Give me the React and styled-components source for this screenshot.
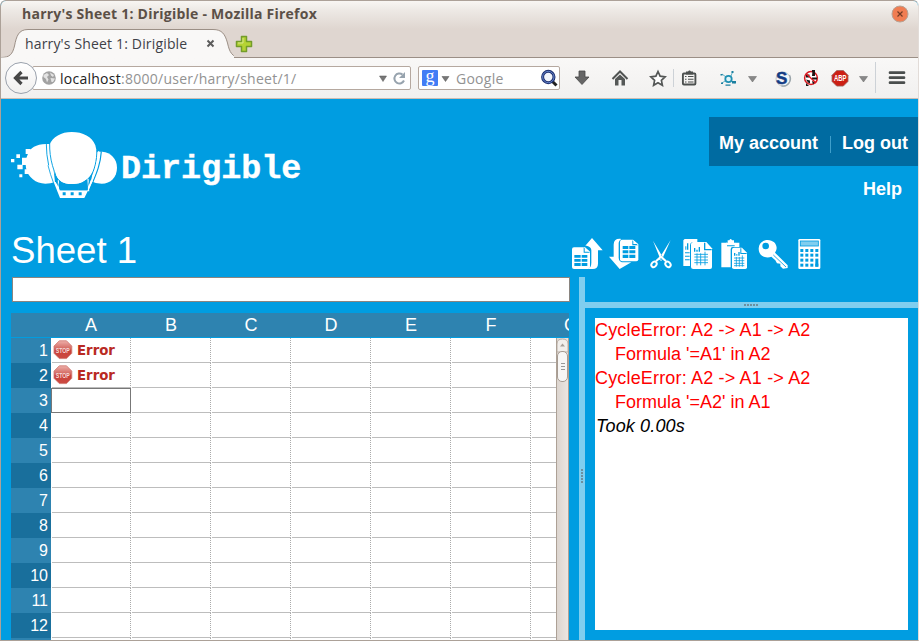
import React from "react";
import styled, { createGlobalStyle, css } from "styled-components";

const Global = createGlobalStyle`
  * { box-sizing: border-box; }
  html, body { margin: 0; padding: 0; overflow: hidden; background: #fff; }
  svg { display: block; flex: none; }
`;

const ui = css`
  font-family: "Open Sans", "Noto Sans", sans-serif;
`;

const Window = styled.div`
  width: 919px;
  height: 641px;
  display: flex;
  flex-direction: column;
  overflow: hidden;
  border: 1px solid #aca198;
  border-right-color: #e2dcd8;
  border-radius: 6px 6px 0 0;
  background: #009de1;
`;

const TitleBar = styled.div`
  height: 28px;
  flex: none;
  display: flex;
  align-items: center;
  justify-content: space-between;
  padding: 0 9px 3px 21px;
  background: linear-gradient(#f8f6f3, #eeeae6 30%, #dfd6d0);
`;

const WindowTitle = styled.span`
  ${ui}
  font-size: 14px;
  font-weight: 700;
  line-height: 20px;
  letter-spacing: 0.24px;
  color: #5b5047;
  white-space: nowrap;
`;

const TabStrip = styled.div`
  height: 29px;
  flex: none;
  display: flex;
  background: #dfd6d0;
  border-bottom: 1px solid #9b8f86;
`;

const Tab = styled.div`
  width: 233px;
  height: 29px;
  display: grid;
  flex: none;
  > * { grid-area: 1 / 1; }
`;

const TabContent = styled.div`
  display: flex;
  align-items: center;
  padding: 0 0 0 24px;
  z-index: 1;
`;

const TabLabel = styled.span`
  ${ui}
  width: 181px;
  font-size: 14px;
  line-height: 20px;
  letter-spacing: 0.16px;
  color: #3e4147;
  white-space: nowrap;
`;

const NewTab = styled.div`
  padding: 6px 0 0 1px;
`;

const NavBar = styled.div`
  height: 41px;
  flex: none;
  display: flex;
  align-items: flex-start;
  background: linear-gradient(#f9f8f7, #f1f0ef);
  border-bottom: 1px solid #cbbdb3;
`;

const BackButton = styled.div`
  width: 32px;
  height: 32px;
  margin: 4px 0 0 4px;
  flex: none;
  display: flex;
  align-items: center;
  justify-content: center;
  border: 1px solid #9aa1ac;
  border-radius: 50%;
  background: linear-gradient(#ffffff, #f0efee);
  z-index: 1;
`;

const Field = styled.div`
  height: 24px;
  width: ${(p) => p.$w}px;
  margin: 8px 0 0 ${(p) => p.$ml}px;
  padding: ${(p) => p.$pad};
  flex: none;
  display: flex;
  align-items: center;
  border: 1px solid #b5a89f;
  border-radius: 2px;
  background: #fff;
`;

const FieldText = styled.span`
  ${ui}
  flex: 1;
  font-size: 14px;
  line-height: 20px;
  letter-spacing: 0.26px;
  color: #929292;
  white-space: nowrap;
  margin-left: ${(p) => p.$ml}px;
  padding-top: 1px;
  b { font-weight: 400; color: #222; }
`;

const NavIcons = styled.div`
  height: 40px;
  width: 358px;
  flex: none;
`;

const Page = styled.main`
  flex: 1;
  min-height: 0;
  display: flex;
  flex-direction: column;
  font-family: "Liberation Sans", Arial, sans-serif;
  color: #fff;
`;

const SiteHeader = styled.header`
  height: 178px;
  flex: none;
  display: flex;
  justify-content: space-between;
`;

const Branding = styled.div`
  display: flex;
  flex-direction: column;
  padding: 32px 0 0 10px;
`;

const Logo = styled.div`
  display: flex;
  height: 68px;
`;

const LogoName = styled.span`
  font: 700 33.4px/40px "Liberation Mono", "Courier New", monospace;
  margin: 18px 0 0 2px;
  -webkit-text-stroke: 0.4px #fff;
`;

const SheetTitle = styled.h1`
  margin: 30px 0 0 0;
  font-size: 36.6px;
  font-weight: 400;
  line-height: 43px;
`;

const HeaderSide = styled.div`
  display: flex;
  flex-direction: column;
  align-items: flex-end;
  padding-top: 18px;
`;

const AccountLinks = styled.nav`
  width: 209px;
  height: 49px;
  display: flex;
  align-items: center;
  justify-content: space-between;
  padding: 2px 10px 0;
  background: #006ba1;
  font-size: 18px;
  font-weight: 700;
  line-height: 24px;
`;

const LinkDivider = styled.i`
  width: 1px;
  height: 17px;
  margin-top: 3px;
  background: #3f9fcb;
`;

const HelpLink = styled.a`
  margin: 11px 16px 0 0;
  font-size: 18px;
  font-weight: 700;
  line-height: 24px;
`;

const Toolbar = styled.div`
  width: 346px;
  margin-top: 37px;
  display: flex;
`;

const Tool = styled.svg`
  height: 31px;
  width: ${(p) => p.$w}px;
  margin-right: ${(p) => p.$gap}px;
`;

const Workspace = styled.div`
  flex: 1;
  min-height: 0;
  display: flex;
`;

const SheetPane = styled.section`
  width: 568px;
  margin-right: 10px;
  display: flex;
  flex-direction: column;
  padding-left: 10px;
  flex: none;
`;

const FormulaBar = styled.div`
  height: 25px;
  margin: 0 -1px 0 1px;
  flex: none;
  border: 1px solid #8a8580;
  background: #fff;
`;

const ColumnHeads = styled.div`
  height: 24px;
  margin: 11px 0 1px;
  padding-left: 40px;
  flex: none;
  display: flex;
  overflow: hidden;
  background: #2e83b0;
`;

const ColumnHead = styled.div`
  width: 80px;
  flex: none;
  text-align: center;
  font-size: 18px;
  line-height: 24px;
`;

const GridBody = styled.div`
  flex: 1;
  min-height: 0;
  display: flex;
  overflow: hidden;
`;

const Rows = styled.div`
  width: 545px;
  overflow: hidden;
`;

const Row = styled.div`
  height: 25px;
  display: flex;
  background: #fff;
`;

const RowHead = styled.div`
  width: 40px;
  flex: none;
  padding-right: 3px;
  text-align: right;
  font-size: 16px;
  line-height: 26px;
  background: ${(p) => (p.$dark ? "#196f9c" : "#2e83b0")};
`;

const Cell = styled.div`
  width: ${(p) => (p.$selected ? 80 : 79)}px;
  height: 25px;
  margin-left: ${(p) => (p.$selected ? 0 : 1)}px;
  padding-left: 1px;
  flex: none;
  display: flex;
  align-items: center;
  border-right: 1px dotted #aaa;
  border-bottom: 1px solid #bdbdbd;
  ${(p) => p.$selected && "border: 1px solid #777;"}
`;

const ErrorText = styled.span`
  margin-left: 4px;
  padding-top: 2px;
  font: 700 13.3px/20px "DejaVu Sans", Verdana, sans-serif;
  color: #b92a23;
`;

const ScrollTrack = styled.div`
  width: 13px;
  flex: none;
  background: linear-gradient(90deg, #dcd5cf, #ebe5e1);
  border: 1px solid #ada196;
  border-width: 0 1px;
`;

const SideArea = styled.section`
  flex: 1;
  display: flex;
`;

const VSplitter = styled.div`
  width: 6px;
  flex: none;
  padding: 192px 0 0 2px;
  background: #80ceef;
`;

const SideColumn = styled.div`
  flex: 1;
  display: flex;
  flex-direction: column;
  padding-top: 25px;
`;

const HSplitter = styled.div`
  height: 6px;
  flex: none;
  padding: 2px 0 0 159px;
  background: #80ceef;
`;

const Output = styled.div`
  flex: 1;
  margin: 10px 10px 10px 10px;
  background: #fff;
  font-size: 18px;
  line-height: 24px;
`;

const OutputLine = styled.div`
  height: 24px;
  white-space: nowrap;
  padding-left: ${(p) => (p.$indent ? 20 : 0)}px;
  letter-spacing: ${(p) => (p.$indent ? 0 : 0.17)}px;
  color: #f00;
`;

const Timing = styled.div`
  padding-left: 1px;
  font-style: italic;
  letter-spacing: 0.15px;
  color: #000;
`;

const BLUE = "#009de1";

const TabShape = () => (
  <svg width="233" height="29" viewBox="0 0 233 29">
    <path
      d="M0 28.5C9 28.5 11.5 25 13.5 17C15.5 7 17.5.5 27 .5H212C221 .5 224 5 226.500 14C228.500 23 231 28.500 240 28.500V30H0Z"
      fill="#f9f8f7"
      stroke="#9b8f86"
    />
    <path d="M0 29H233" stroke="#f9f8f7" />
  </svg>
);

const Airship = () => (
  <svg width="108" height="68" viewBox="9 9 324 204" fill="#fff">
    <path d="M114 48C84 49 66 60 60 77Q50 98 54 120C60 148 84 167 112 167Q128 167 141 162L128 48Z" />
    <path d="M266 71H283C308 73 327 92 327 119C327 147 308 167 281 167Q262 167 249 160Z" />
    <path d="M124 52C134 26 160 12 191 12C225 12 252 26 262 52Q268 68 265 88C262 122 250 168 191 168C140 168 130 115 125 80Q122 64 124 52Z" />
    <path d="M115 48Q115 80 122 112M125 46C124 92 136 133 163 183" fill="none" stroke={BLUE} strokeWidth="2.800" />
    <path d="M120 112Q127 140 137 166" fill="none" stroke={BLUE} strokeWidth="2.500" />
    <path d="M267 66C266 98 261 124 246 150" fill="none" stroke={BLUE} strokeWidth="3" />
    <path d="M280 70C277 111 265 137 252 168" fill="none" stroke={BLUE} strokeWidth="3.500" />
    <path d="M272 70C270 110 260 138 242 182" fill="none" stroke="#fff" strokeWidth="4" />
    <path d="M137 162L156 210H229L254 160L248 156L238 187H157L143 162Z" />
    <path d="M152 160L168 167Q190 173 218 165L239 153V187H155Z" fill={BLUE} />
    <path d="M144 140Q155 170 195 168Q231 167 245 140L235 120H154Z" />
    <path d="M151 157V190M240 152L242 190" stroke="#fff" strokeWidth="3.500" />
    <path d="M142 150Q148 162 157 184M248 150L238 178" stroke={BLUE} strokeWidth="2" fill="none" />
    <path d="M164 193h9v9h-9zM188 193h9v9h-9zM212 193h9v9h-9z" fill={BLUE} />
    <path d="M53 63h15v15h-15zM25 79h11v11h-11zM42 89h18v22h-18zM9 93h10v10h-10zM28 110h16v14h-16zM50 124h16v14h-16zM34 139h9v9h-9z" />
  </svg>
);

const NavGlyphs = () => (
  <svg width="358" height="40" viewBox="560 58 358 40">
    <path d="M579 71h6v6h4l-7 7.500l-7-7.500h4z" fill="#666" stroke="#484848" strokeWidth=".8" />
    <path d="M612.500 79L620 71.500L627.500 79" fill="none" stroke="#505352" strokeWidth="2" />
    <path d="M615 79L620 74.500L625 79V85.500H621.500V80H618.500V85.500H615Z" fill="#555857" />
    <path d="M658 71.500l2.100 4.700l5 .6l-3.700 3.500l1 5l-4.400-2.500l-4.400 2.500l1-5l-3.700-3.500l5-.6z" fill="#fff" stroke="#545756" strokeWidth="1.700" />
    <path d="M673.500 69v18" stroke="#cdd2d7" />
    <rect x="682.900" y="73.500" width="12.500" height="11" rx="1" fill="none" stroke="#4c504f" strokeWidth="1.900" />
    <path d="M686 71.500h2l1-1h1l1 1h2v3h-7z" fill="#4c504f" />
    <path d="M685 76.500h1.500m1.500 0h5.500M685 79.200h1.500m1.500 0h5.500M685 82h1.500m1.500 0h5.500" stroke="#4c504f" strokeWidth="1.100" />
    <path d="M722 74l4 3M731 76l1.500-4M725 81l-3 2M731 81l4 2" stroke="#5fb2c8" strokeWidth="1" />
    <circle cx="728.500" cy="79" r="3.200" fill="#dff5fa" stroke="#2190b2" strokeWidth="1.800" />
    <path d="M720.500 74h2v1.500h-2zM731.500 71h2v2h-2zM721 82.500h2v1.500h-2zM725.500 84.500h5v1.300h-5zM732 81h4v2.500h-4z" fill="#1b7f9f" />
    <path d="M748.500 76.500h8l-4 5.500zM859.500 76.500h8l-4 5.500z" fill="#888" stroke="#666" strokeWidth=".5" />
    <circle cx="783" cy="79" r="7" fill="#f3f5f7" stroke="#c1c6cb" />
    <path d="M789.500 75a7.500 7.500 0 0 1-8 11" fill="none" stroke="#9ca6ab" strokeWidth="1.300" />
    <text x="776" y="83.500" fontFamily="Liberation Sans" fontSize="17" fontWeight="700" fill="#133c84" stroke="#133c84" strokeWidth=".5">S</text>
    <circle cx="811" cy="78" r="6.400" fill="#fff" stroke="#d71920" strokeWidth="1.500" />
    <path d="M806 74.500h3.500v3h-3.500zM812.500 71l2.500 1v4h-3zM812 77.500h5v2h-5zM806 79.500l4 1v3l-2-1zM812 81l3 1l-2 2.500zM806 83l3 3h-3zM812 70h3v2h-3z" fill="#1d1515" />
    <path d="M806 73.500L816 83" stroke="#e01922" strokeWidth="1.500" />
    <path d="M836.700 70.500h6.600l4.700 4.700v6.200l-4.700 4.700h-6.600l-4.700-4.700v-6.200z" fill="#cc1f14" stroke="#9c6762" strokeWidth=".8" />
    <text x="834" y="81.300" textLength="12.500" lengthAdjust="spacingAndGlyphs" fontFamily="Liberation Sans" fontSize="8.500" fontWeight="700" fill="#fff">ABP</text>
    <path d="M875.500 62v31" stroke="#cdd2d7" />
    <path d="M890 72.700h14M890 77.700h14M890 82.700h14" stroke="#4a4e4d" strokeWidth="2.700" strokeLinecap="round" />
  </svg>
);

const Stop = () => (
  <svg width="20" height="20" viewBox="0 0 20 20">
    <defs>
      <linearGradient id="stopRed" x1="0" y1="0" x2="0" y2="1">
        <stop offset="0" stopColor="#eeb0aa" />
        <stop offset=".45" stopColor="#d2665f" />
        <stop offset=".55" stopColor="#c9423a" />
        <stop offset="1" stopColor="#cc4b43" />
      </linearGradient>
    </defs>
    <path d="M6.300 .8h7.200l5.300 5.300v7.200l-5.300 5.300h-7.200L1 13.300V6.100z" fill="url(#stopRed)" stroke="#cf766f" strokeWidth=".8" />
    <text x="2.800" y="12.800" textLength="14" lengthAdjust="spacingAndGlyphs" fontFamily="Liberation Sans" fontSize="8" fontWeight="700" fill="#f6dcda">STOP</text>
  </svg>
);

const tools = [
  {
    x: 36, w: 31, gap: 6,
    art: (
      <>
        <path d="M96 24L128 61H114V101Q114 117 98 117H84Q94 112 94 98V61Q94 50 80 47H76Z" />
        <path d="M42 52H75L90 66V111Q90 117 84 117H42Q36 117 36 111V58Q36 52 42 52Z" />
        <path d="M71 52V68H90M43 75H62V83H43zM65 75H82V83H65zM43 87H62V95H43zM65 87H82V95H65zM43 99H62V108H43zM65 99H82V108H65z" fill={BLUE} stroke="none" />
        <path d="M74 52V65H90Z" />
      </>
    ),
  },
  {
    x: 147, w: 30, gap: 11,
    art: (
      <>
        <path d="M185 27Q161 24 161 44V80H147L179 117L214 97H193Q176 97 176 83V40Q176 31 185 27Z" />
        <path d="M187 29H219L235 43V88Q235 94 229 94H187Q180 94 180 88V35Q180 29 187 29Z" />
        <path d="M217 31V46H234M188 48H205V57H188zM208 48H226V57H208zM188 61H205V70H188zM208 61H226V70H208zM188 74H205V84H188zM208 74H226V84H208z" fill={BLUE} />
        <path d="M220 31V42H233Z" />
      </>
    ),
  },
  {
    x: 271, w: 22, gap: 11,
    art: (
      <>
        <path d="M280 32L312 86L303 90Z M333 30L297 88L305 93Z" />
        <ellipse cx="283" cy="103" rx="9" ry="7" transform="rotate(-50 283 103)" fill="none" stroke="#fff" strokeWidth="6" />
        <ellipse cx="325" cy="103" rx="9" ry="7" transform="rotate(50 325 103)" fill="none" stroke="#fff" strokeWidth="6" />
        <path d="M289 94L304 80L319 94" fill="none" stroke="#fff" strokeWidth="6" />
      </>
    ),
  },
  {
    x: 368, w: 30, gap: 8,
    art: (
      <>
        <path d="M373 27H411V36H399Q389 36 389 47V108H369V31Z" />
        <path d="M375 49h3v10h-3zM380 40h4v19h-4zM374 67h14v3h-14zM374 77h14v3h-14zM374 88h14v3h-14z" fill={BLUE} />
        <path d="M399 36H438L455 55V111Q455 117 449 117H399Q392 117 392 111V43Q392 36 399 36Z" />
        <path d="M435 38V57H454V61H431V38z" fill={BLUE} />
        <path d="M401 54h4v11h-4zM408 59h4v6h-4zM415 51h4v14h-4z" fill={BLUE} />
        <path d="M402 73H443M402 81H443M402 90H443M402 98H443M410 70V106M421 70V106M434 65V106" stroke={BLUE} strokeWidth="2.500" />
      </>
    ),
  },
  {
    x: 482, w: 27, gap: 10,
    art: (
      <>
        <path d="M483 38H500V49H523V38H537V51H517Q511 51 511 58V112H483Z" />
        <path d="M497 38H502V31H507Q511 23 515 31H521V38H525V46H497Z" />
        <path d="M521 53H545L560 68V112Q560 117 555 117H521Q515 117 515 112V59Q515 53 521 53Z" />
        <path d="M543 55V69H559V72H540V55zM521 69h4v8h-4zM528 72h3v5h-3zM534 66h4v11h-4z" fill={BLUE} />
        <path d="M521 84H552M521 92H552M521 100H552M521 107H552M528 81V110M537 81V110M546 76V110" stroke={BLUE} strokeWidth="2.300" />
      </>
    ),
  },
  {
    x: 592, w: 31, gap: 9,
    art: (
      <>
        <path fillRule="evenodd" d="M621 30C637 30 648 41 648 54Q648 62 643 68L681 106V114L667 116L659 109V101L649 100L644 91L632 80Q626 83 616 82C602 80 594 69 594 56C594 41 605 30 621 30ZM615 38A10 10 0 1 0 615 58A10 10 0 1 0 615 38Z" />
        <path d="M638 75L676 111" stroke={BLUE} strokeWidth="2.500" />
      </>
    ),
  },
  {
    x: 713, w: 23, gap: 0,
    art: (
      <>
        <rect x="714" y="27" width="66" height="90" rx="4" />
        <rect x="720" y="33" width="54" height="15" fill="#80ceef" stroke={BLUE} strokeWidth="2.500" />
        {[57, 71, 86, 101].map((y) =>
          [720, 735, 750, 765].map((x) => (
            <rect key={x + "-" + y} x={x} y={y} width="9" height={x === 765 && y === 86 ? 24 : 9} fill={BLUE} />
          ))
        )}
      </>
    ),
  },
];

const errorLines = [
  ["CycleError: A2 -> A1 -> A2", false],
  ["Formula '=A1' in A2", true],
  ["CycleError: A2 -> A1 -> A2", false],
  ["Formula '=A2' in A1", true],
];

const columns = ["A", "B", "C", "D", "E", "F", "G"];
const rowNumbers = Array.from({ length: 13 }, (_, i) => i + 1);
const errorCells = new Set(["A1", "A2"]);

export default function App() {
  return (
    <Window>
      <Global />
      <TitleBar>
        <WindowTitle>harry's Sheet 1: Dirigible - Mozilla Firefox</WindowTitle>
        <svg width="18" height="18" viewBox="0 0 18 18">
          <circle cx="9" cy="9" r="8" fill="#f07d52" stroke="#b8a294" />
          <path d="M6.500 6.500l5 5m0-5l-5 5" stroke="#733b25" strokeWidth="1.200" />
        </svg>
      </TitleBar>
      <TabStrip>
        <Tab>
          <TabShape />
          <TabContent>
            <TabLabel>harry's Sheet 1: Dirigible</TabLabel>
            <svg width="9" height="9" viewBox="0 0 9 9">
              <path d="M1.500 1.500l6 6m0-6l-6 6" stroke="#5c5c5c" strokeWidth="2" />
            </svg>
          </TabContent>
        </Tab>
        <NewTab>
          <svg width="18" height="18" viewBox="0 0 18 18">
            <path d="M6.500 1.500h5v5h5v5h-5v5h-5v-5h-5v-5h5z" fill="#b5d334" stroke="#739c2b" strokeWidth="1.500" strokeLinejoin="round" />
            <path d="M8 3v5H3" fill="none" stroke="#d5e68a" />
          </svg>
        </NewTab>
      </TabStrip>
      <NavBar>
        <BackButton>
          <svg width="16" height="16" viewBox="0 0 16 16">
            <path d="M8.500 2L2.500 8L8.500 14M3 8H15" fill="none" stroke="#474747" strokeWidth="3.200" />
          </svg>
        </BackButton>
        <Field $w={379} $ml={-5} $pad="0 3px 0 9px">
          <svg width="14" height="14" viewBox="0 0 14 14">
            <circle cx="7" cy="7" r="6.800" fill="#a2a2a2" />
            <path d="M1.500 4L5 2L7 4L5 6L6.500 8.500L5 11.500L4 8L1.500 6ZM8 1.500L12 4L11 6L9 4.500ZM8.500 7L13 7.500L11 11L9.500 11Z" fill="#e3e3e3" />
          </svg>
          <FieldText $ml={4}><b>localhost</b>:8000/user/harry/sheet/1/</FieldText>
          <svg width="28" height="14" viewBox="0 0 28 14">
            <path d="M.5 5h7l-3.500 5.500z" fill="#777" stroke="#555" strokeWidth=".5" />
            <path d="M25 9.500A5 5 0 1 1 23.500 3.500" fill="none" stroke="#97a3ae" strokeWidth="2" />
            <path d="M26 1V7H20Z" fill="#97a3ae" />
          </svg>
        </Field>
        <Field $w={142} $ml={7} $pad="0 1px 0 3px">
          <svg width="28" height="16" viewBox="0 0 28 16">
            <rect width="16" height="16" rx="1" fill="#427df5" />
            <text x="3.500" y="11.500" fontFamily="Liberation Serif" fontSize="18" fill="#fff">g</text>
            <path d="M20 6.500h7l-3.500 5z" fill="#777" stroke="#555" strokeWidth=".5" />
          </svg>
          <FieldText $ml={6}>Google</FieldText>
          <svg width="18" height="18" viewBox="0 0 18 18">
            <path d="M12 12L16.500 16.500" stroke="#222" strokeWidth="3" />
            <circle cx="8.300" cy="8" r="5.700" fill="#f1f4fb" stroke="#1e3070" strokeWidth="3" />
            <circle cx="8.300" cy="8" r="5.700" fill="none" stroke="#6484ca" strokeWidth="1" />
          </svg>
        </Field>
        <NavIcons><NavGlyphs /></NavIcons>
      </NavBar>
      <Page>
        <SiteHeader>
          <Branding>
            <Logo>
              <Airship />
              <LogoName>Dirigible</LogoName>
            </Logo>
            <SheetTitle>Sheet 1</SheetTitle>
          </Branding>
          <HeaderSide>
            <AccountLinks>
              <span>My account</span>
              <LinkDivider />
              <span>Log out</span>
            </AccountLinks>
            <HelpLink>Help</HelpLink>
            <Toolbar>
              {tools.map((t) => (
                <Tool key={t.x} $w={t.w} $gap={t.gap} viewBox={`${t.x} 24 ${t.w * 3} 93`} fill="#fff">
                  {t.art}
                </Tool>
              ))}
            </Toolbar>
          </HeaderSide>
        </SiteHeader>
        <Workspace>
          <SheetPane>
            <FormulaBar />
            <ColumnHeads>
              {columns.map((c) => <ColumnHead key={c}>{c}</ColumnHead>)}
            </ColumnHeads>
            <GridBody>
              <Rows>
                {rowNumbers.map((n) => (
                  <Row key={n}>
                    <RowHead $dark={n % 2 === 0}>{n}</RowHead>
                    {columns.map((c) => (
                      <Cell key={c} $selected={c + n === "A3"}>
                        {errorCells.has(c + n) && (
                          <>
                            <Stop />
                            <ErrorText>Error</ErrorText>
                          </>
                        )}
                      </Cell>
                    ))}
                  </Row>
                ))}
              </Rows>
              <ScrollTrack>
                <svg width="11" height="45" viewBox="0 0 11 45">
                  <path d="M0 14V6Q0 1 5.500 1T11 6V14Z" fill="#f1eeeb" stroke="#b9aea5" />
                  <path d="M3 8.500L5.500 5.500L8 8.500Z" fill="#a8a099" />
                  <rect x=".5" y="13.500" width="10" height="30" rx="4.500" fill="#f7f6f5" stroke="#a69b92" />
                  <path d="M4 25.500h4M4 28.500h4M4 31.500h4" stroke="#999" />
                </svg>
              </ScrollTrack>
            </GridBody>
          </SheetPane>
          <SideArea>
            <VSplitter>
              <svg width="2" height="14" viewBox="0 0 2 14">
                <path d="M1 0V14" stroke="#6c8f9f" strokeWidth="2" strokeDasharray="2 1" />
              </svg>
            </VSplitter>
            <SideColumn>
              <HSplitter>
                <svg width="14" height="2" viewBox="0 0 14 2">
                  <path d="M0 1H14" stroke="#6c8f9f" strokeWidth="2" strokeDasharray="2 1" />
                </svg>
              </HSplitter>
              <Output>
                {errorLines.map(([text, indent], i) => (
                  <OutputLine key={i} $indent={indent}>{text}</OutputLine>
                ))}
                <Timing>Took 0.00s</Timing>
              </Output>
            </SideColumn>
          </SideArea>
        </Workspace>
      </Page>
    </Window>
  );
}
